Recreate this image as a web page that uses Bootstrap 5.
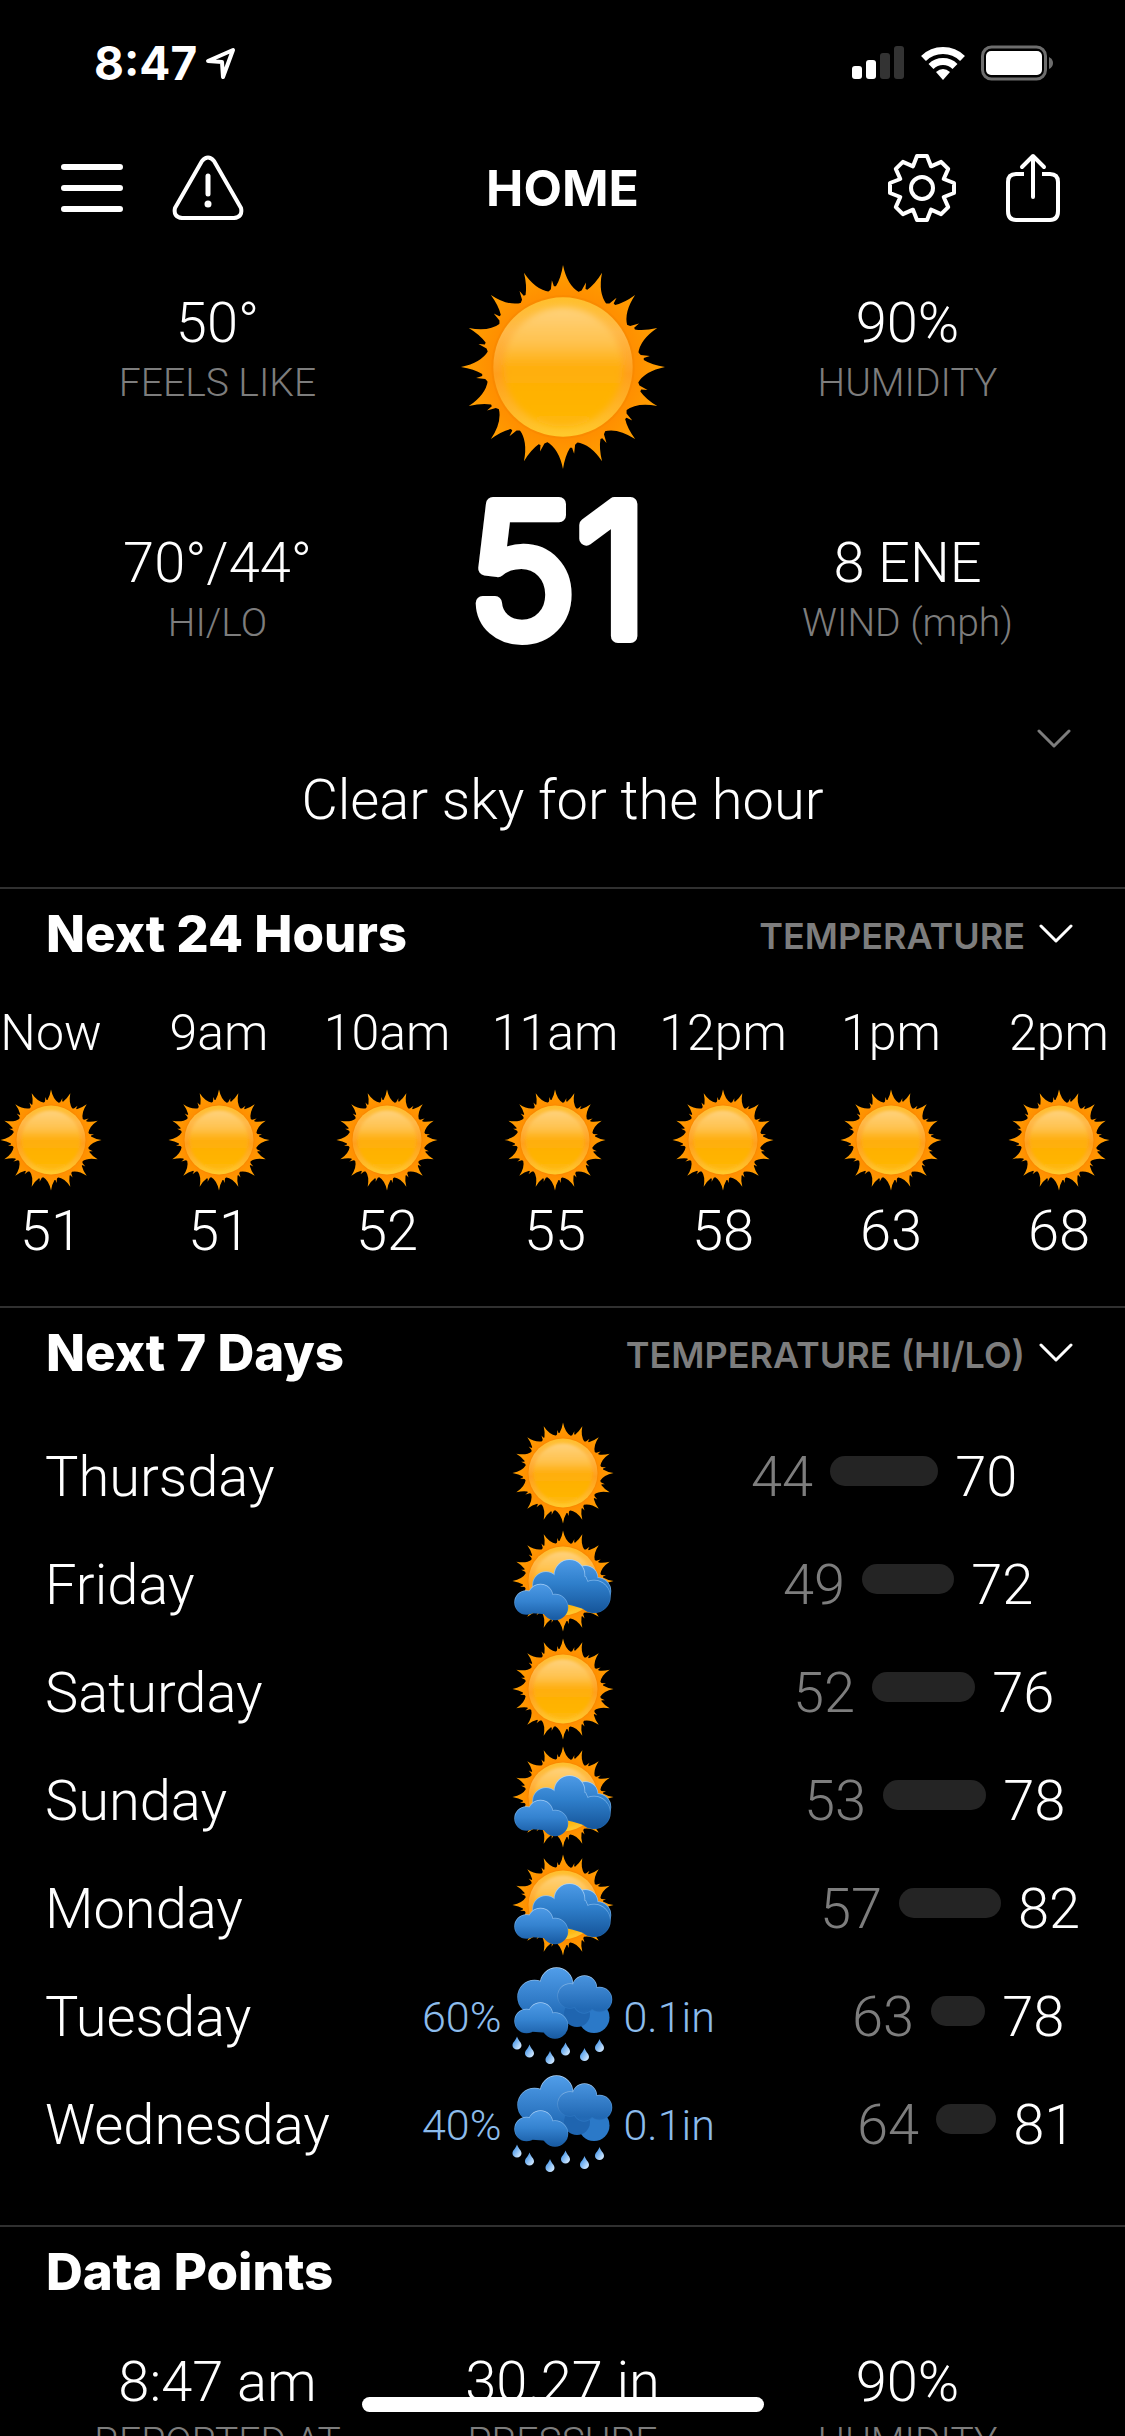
<!DOCTYPE html>
<html lang="en" data-bs-theme="dark">
<head>
<meta charset="utf-8">
<meta name="viewport" content="width=device-width, initial-scale=1">
<title>Home weather</title>
<link href="https://cdn.jsdelivr.net/npm/bootstrap@5.3.0/dist/css/bootstrap.min.css" rel="stylesheet">
<style>
  :root { --dim: #7d7d7d; --rule: #303030; --rain: #8cbcec; --edge: 45px; }
  body { background: #000; color: #fff; font-family: Roboto, "Liberation Sans", sans-serif; font-weight: 300; }
  .screen { overflow-y: auto; scrollbar-width: none; }
  .screen::-webkit-scrollbar { display: none; }
  .ui { font-family: Inter, "Liberation Sans", sans-serif; }
  .screen svg { display: block; flex: none; }
  .icon-btn { background: none; border: 0; padding: 0; color: inherit; }
  .line { fill: none; stroke: currentColor; stroke-linecap: round; stroke-linejoin: round; }

  .statusbar { height: 126px; padding: 0 71px 0 94px; }
  .status-icons { gap: 16px; }
  .clock { font-size: 46px; font-weight: 700; }
  .topbar { height: 124px; padding: 0 60px; }
  .topbar h1 { font-size: 50px; font-weight: 700; }

  .now { padding: 2px var(--edge) 0; }
  .stats { gap: 120px; padding-top: 39px; }
  .val { font-size: 56px; line-height: 64px; }
  .cap { font-size: 39px; line-height: 56px; color: var(--dim); }
  .hero { padding-top: 12px; }
  .bigtemp { margin-top: 21px; overflow: visible; }
  .bigtemp text { font-size: 182px; font-weight: 300; fill: #fff; stroke: #fff; stroke-width: 14px; stroke-linejoin: round; text-anchor: middle; }
  .expand { padding: 77px 54px 0; color: var(--dim); }
  .summary { padding: 18px var(--edge) 55px; }

  .block { border-top: 2px solid var(--rule); }
  .head { height: 90px; padding: 0 52px 0 46px; }
  .head h2 { font-size: 51px; font-weight: 800; }
  .pick { gap: 14px; }
  .pick select { appearance: none; background: none; border: 0; padding: 4px 0 0; color: var(--dim); font-size: 36px; font-weight: 600; text-align-last: right; }

  .hours { margin: 0 -33px; padding: 24px 0 43px; }
  .hour { flex: 0 0 168px; }
  .hour-label { font-size: 50px; line-height: 60px; }
  .hour svg { margin: 26px 0 8px; }

  .days { padding: 21px var(--edge) 50px; }
  .day { display: grid; grid-template-columns: 1fr 102px 1fr; column-gap: 10px; height: 108px; align-items: center; }
  .day-text { padding-top: 8px; }
  .wet { font-size: 43px; color: var(--rain); }
  .range { width: 329px; gap: 17px; }
  .lo { color: var(--dim); }
  .span-bar { height: 30px; border-radius: 15px; background: #242424; margin-bottom: 12px; }
  .points { padding: 33px var(--edge) 40px; }
  .homebar { left: 50%; bottom: 24px; width: 402px; height: 15px; margin-left: -201px; border-radius: 8px; background: #fff; }
</style>
</head>
<body>
<svg width="0" height="0" class="position-absolute" aria-hidden="true">
  <defs>
    <linearGradient id="gRay" gradientUnits="userSpaceOnUse" x1="0" y1="-101" x2="0" y2="-66"><stop offset="0" stop-color="#ffa000"/><stop offset="1" stop-color="#ff8c00"/></linearGradient>
    <linearGradient id="gRim" x1="0" y1="0" x2="0" y2="1"><stop offset="0" stop-color="#ffc02c"/><stop offset=".25" stop-color="#ffb848"/><stop offset=".55" stop-color="#ff9f1c"/><stop offset=".8" stop-color="#ffb628"/><stop offset="1" stop-color="#ffca2c"/></linearGradient>
    <linearGradient id="gDisc" x1="0" y1="0" x2="0" y2="1"><stop offset="0" stop-color="#ffd27c"/><stop offset=".3" stop-color="#ffc24e"/><stop offset=".5" stop-color="#ffae0c"/><stop offset=".8" stop-color="#ffb300"/><stop offset="1" stop-color="#ffb80c"/></linearGradient>
    <filter id="soft" x="-20%" y="-20%" width="140%" height="140%"><feGaussianBlur stdDeviation="3"/></filter>
    <linearGradient id="gBack" gradientUnits="userSpaceOnUse" x1="0" y1="-42" x2="0" y2="62"><stop offset="0" stop-color="#4d9ae6"/><stop offset=".45" stop-color="#2f7fcb"/><stop offset="1" stop-color="#16569b"/></linearGradient>
    <linearGradient id="gSmall" gradientUnits="userSpaceOnUse" x1="0" y1="5" x2="0" y2="76"><stop offset="0" stop-color="#4d9ae6"/><stop offset=".5" stop-color="#3583d0"/><stop offset="1" stop-color="#195ca4"/></linearGradient>
    <linearGradient id="gEdge" gradientUnits="userSpaceOnUse" x1="0" y1="-42" x2="0" y2="50"><stop offset="0" stop-color="#b4d8fa"/><stop offset=".6" stop-color="#6aa9e4"/><stop offset="1" stop-color="#1d62ab"/></linearGradient>
    <linearGradient id="gEdgeS" gradientUnits="userSpaceOnUse" x1="0" y1="5" x2="0" y2="66"><stop offset="0" stop-color="#a9d0f8"/><stop offset=".6" stop-color="#5b9fdf"/><stop offset="1" stop-color="#1d62ab"/></linearGradient>
    <linearGradient id="gStorm" gradientUnits="userSpaceOnUse" x1="0" y1="-90" x2="0" y2="10"><stop offset="0" stop-color="#509de9"/><stop offset="1" stop-color="#2069b5"/></linearGradient>
    <linearGradient id="gStorm2" gradientUnits="userSpaceOnUse" x1="0" y1="-74" x2="0" y2="20"><stop offset="0" stop-color="#4893de"/><stop offset=".7" stop-color="#2269b4"/><stop offset="1" stop-color="#2670bc"/></linearGradient>
    <linearGradient id="gStormE" gradientUnits="userSpaceOnUse" x1="0" y1="-90" x2="0" y2="-10"><stop offset="0" stop-color="#b4d8fa"/><stop offset="1" stop-color="#2a74c0"/></linearGradient>
    <linearGradient id="gDrop" x1="0" y1="0" x2="1" y2="1"><stop offset=".3" stop-color="#5ea4ec"/><stop offset=".8" stop-color="#c4e0fc"/></linearGradient>

    <path id="ray" fill="url(#gRay)" d="M-20-64L-15-74-12-77-11-86-9-80-7-80Q-2-88 0-101Q4-81 16-74L20-64Z"/>
    <g id="rays4"><use href="#ray"/><use href="#ray" transform="rotate(22.5)"/><use href="#ray" transform="rotate(45)"/><use href="#ray" transform="rotate(67.5)"/></g>
    <g id="sunArt">
      <use href="#rays4"/><use href="#rays4" transform="rotate(90)"/><use href="#rays4" transform="rotate(180)"/><use href="#rays4" transform="rotate(270)"/>
      <circle r="71" fill="#fa8a00"/>
      <circle r="69" fill="url(#gRim)"/>
      <circle r="59" fill="url(#gDisc)" filter="url(#soft)"/>
    </g>
    <g id="smallShape"><circle cx="-73" cy="43" r="23"/><circle cx="-45" cy="31" r="24"/><circle cx="-16" cy="52" r="25"/><path d="M-73 43L-45 31-16 52-22 66-60 63Z"/></g>
    <g id="smallCloud"><use href="#smallShape" fill="none" stroke="url(#gEdgeS)" stroke-width="3"/><use href="#smallShape" fill="url(#gSmall)"/></g>
    <g id="bigShape"><circle cx="-34" cy="8" r="26"/><circle cx="13" cy="-12" r="30"/><circle cx="62" cy="31" r="32"/><path d="M-50 0L13-20 45-8 62 31 60 60 20 48-40 34Z"/></g>
    <g id="farShape"><circle cx="45" cy="-6" r="24"/><circle cx="69" cy="20" r="26"/></g>
    <symbol id="sun" viewBox="-102 -102 204 204"><use href="#sunArt"/></symbol>
    <symbol id="partly" viewBox="-102 -102 204 204">
      <use href="#sunArt"/>
      <use href="#farShape" fill="none" stroke="url(#gEdge)" stroke-width="3"/><use href="#farShape" fill="url(#gBack)"/>
      <use href="#bigShape" fill="none" stroke="url(#gEdge)" stroke-width="3"/><use href="#bigShape" fill="url(#gBack)"/>
      <use href="#smallCloud"/>
    </symbol>
    <g id="stormA"><circle cx="-57" cy="-32" r="33"/><circle cx="-13" cy="-58" r="32"/><path d="M-70-20L0-50 40-40 40 20-50 0Z"/></g>
    <g id="stormB"><circle cx="14" cy="-34" r="24"/><circle cx="43" cy="-50" r="24"/><circle cx="73" cy="-27" r="24"/><circle cx="42" cy="-20" r="20"/></g>
    <path id="drop" fill="url(#gDrop)" d="M0-13C3-4 9-2 9 5A9 8 0 0 1-9 5C-9-2-3-4 0-13Z"/>
    <symbol id="rain" viewBox="-102 -102 204 204">
      <use href="#stormA" fill="none" stroke="url(#gStormE)" stroke-width="3"/><use href="#stormA" fill="url(#gStorm)"/>
      <circle cx="62" cy="9" r="31" fill="#2b79c8"/>
      <circle cx="28" cy="2" r="26" fill="#1f65b0"/>
      <use href="#stormB" fill="none" stroke="url(#gStormE)" stroke-width="3"/><use href="#stormB" fill="url(#gStorm2)"/>
      <use href="#smallCloud" y="-27"/>
      <use href="#drop" x="-92" y="60"/><use href="#drop" x="-67" y="76"/><use href="#drop" x="-26" y="89"/><use href="#drop" x="5" y="72"/><use href="#drop" x="43" y="83"/><use href="#drop" x="73" y="65"/>
    </symbol>
    <symbol id="chev" viewBox="0 0 34 22"><path class="line" stroke-width="3" d="M2 3L17 18 32 3"/></symbol>
  </defs>
</svg>

<div class="screen vh-100">
  <div class="statusbar ui d-flex align-items-center justify-content-between">
    <div class="d-flex align-items-center gap-2">
      <span class="clock">8:47</span>
      <svg width="32" height="34" viewBox="0 0 32 34" aria-hidden="true"><path class="line" stroke-width="4" d="M3 15L28 4 18 31 17 16Z"/></svg>
    </div>
    <div class="status-icons d-flex align-items-center">
      <svg width="53" height="34" viewBox="0 0 53 34" aria-label="Signal"><g fill="#fff"><rect y="20" width="10" height="13" rx="3"/><rect x="14" y="14" width="10" height="19" rx="3"/></g><g fill="#333"><rect x="28" y="7" width="10" height="26" rx="3"/><rect x="42" width="10" height="33" rx="3"/></g></svg>
      <svg width="44" height="34" viewBox="0 0 44 34" aria-label="Wi-Fi"><g fill="none" stroke="#fff" stroke-width="7"><path d="M2.500 12.500A28 28 0 0 1 41.500 12.500"/><path d="M10 20.500A17 17 0 0 1 34 20.500"/></g><path fill="#fff" d="M15 26Q22 20 29 26L22 34Z"/></svg>
      <svg width="73" height="36" viewBox="0 0 73 36" aria-label="Battery"><rect x="1.500" y="2" width="63" height="32" rx="9" fill="none" stroke="#6d6d6d" stroke-width="3"/><rect x="5" y="6" width="56" height="24" rx="5" fill="#fff"/><path fill="#6d6d6d" d="M68 12Q72 14 72 18T68 24Z"/></svg>
    </div>
  </div>

  <header class="topbar ui d-flex align-items-center">
    <div class="col d-flex align-items-center">
      <button class="icon-btn" aria-label="Menu"><svg width="64" height="52" viewBox="0 0 64 52"><path class="line" stroke-width="6" d="M4 5H60M4 26H60M4 47H60"/></svg></button>
      <button class="icon-btn ms-5" aria-label="Alerts"><svg width="72" height="66" viewBox="0 0 72 66"><path class="line" stroke-width="4" d="M30 6Q36-1 42 6L69 53Q71 62 62 63H10Q1 62 3 53Z"/><path class="line" stroke-width="5" d="M36 21V39"/><circle cx="36" cy="49" r="3.500" fill="#fff"/></svg></button>
    </div>
    <h1 class="m-0">HOME</h1>
    <div class="col d-flex align-items-center justify-content-end">
      <button class="icon-btn me-5" aria-label="Settings"><svg width="70" height="70" viewBox="-35 -35 70 70"><path class="line" stroke-width="4" d="M-5-32H5L9-21.700 19.100-26.200 26.200-19.100 21.700-9 32-5V5L21.700 9 26.200 19.100 19.100 26.200 9 21.700 5 32H-5L-9 21.700-19.100 26.200-26.200 19.100-21.700 9-32 5V-5L-21.700-9-26.200-19.100-19.100-26.200-9-21.700Z"/><circle class="line" stroke-width="4" r="11"/></svg></button>
      <button class="icon-btn me-1" aria-label="Share"><svg width="56" height="70" viewBox="0 0 56 70"><path class="line" stroke-width="4" style="stroke-linecap:butt" d="M19 21H11Q3 21 3 29V58Q3 67 11 67H45Q53 67 53 58V29Q53 21 45 21H37"/><path class="line" stroke-width="4" d="M28 3V44M17 14L28 3 39 14"/></svg></button>
    </div>
  </header>

  <main>
    <section class="now row g-0 text-center" aria-label="Current conditions">
      <div class="col stats d-flex flex-column">
        <div><div class="val">50°</div><div class="cap">FEELS LIKE</div></div>
        <div><div class="val">70°/44°</div><div class="cap">HI/LO</div></div>
      </div>
      <div class="col hero d-flex flex-column align-items-center">
        <svg width="206" height="206" role="img" aria-label="Sunny"><use href="#sun"/></svg>
        <svg class="bigtemp ui" width="240" height="160"><text x="115" y="145">51</text></svg>
      </div>
      <div class="col stats d-flex flex-column">
        <div><div class="val">90%</div><div class="cap">HUMIDITY</div></div>
        <div><div class="val">8 ENE</div><div class="cap">WIND (mph)</div></div>
      </div>
    </section>
    <div class="expand d-flex justify-content-end"><button class="icon-btn" aria-label="Show next hour"><svg width="34" height="22"><use href="#chev"/></svg></button></div>
    <p class="summary val text-center m-0">Clear sky for the hour</p>

    <section class="block overflow-hidden">
      <div class="head ui d-flex align-items-center justify-content-between">
        <h2 class="m-0">Next 24 Hours</h2>
        <label class="pick d-flex align-items-center"><select aria-label="Hourly measure"><option>TEMPERATURE</option><option>WIND</option></select><svg width="34" height="22"><use href="#chev"/></svg></label>
      </div>
      <ul class="hours d-flex list-unstyled mb-0 text-center">
        <li class="hour d-flex flex-column align-items-center"><span class="hour-label">Now</span><svg width="102" height="102"><use href="#sun"/></svg><span class="val">51</span></li>
        <li class="hour d-flex flex-column align-items-center"><span class="hour-label">9am</span><svg width="102" height="102"><use href="#sun"/></svg><span class="val">51</span></li>
        <li class="hour d-flex flex-column align-items-center"><span class="hour-label">10am</span><svg width="102" height="102"><use href="#sun"/></svg><span class="val">52</span></li>
        <li class="hour d-flex flex-column align-items-center"><span class="hour-label">11am</span><svg width="102" height="102"><use href="#sun"/></svg><span class="val">55</span></li>
        <li class="hour d-flex flex-column align-items-center"><span class="hour-label">12pm</span><svg width="102" height="102"><use href="#sun"/></svg><span class="val">58</span></li>
        <li class="hour d-flex flex-column align-items-center"><span class="hour-label">1pm</span><svg width="102" height="102"><use href="#sun"/></svg><span class="val">63</span></li>
        <li class="hour d-flex flex-column align-items-center"><span class="hour-label">2pm</span><svg width="102" height="102"><use href="#sun"/></svg><span class="val">68</span></li>
      </ul>
    </section>

    <section class="block">
      <div class="head ui d-flex align-items-center justify-content-between">
        <h2 class="m-0">Next 7 Days</h2>
        <label class="pick d-flex align-items-center"><select aria-label="Daily measure"><option>TEMPERATURE (HI/LO)</option><option>WIND</option></select><svg width="34" height="22"><use href="#chev"/></svg></label>
      </div>
      <ul class="days list-unstyled mb-0">
        <li class="day"><div class="day-text"><span class="val">Thursday</span></div><svg width="102" height="102"><use href="#sun"/></svg><div class="day-text d-flex justify-content-end"><div class="range val d-flex align-items-center"><span class="lo">44</span><span class="span-bar" style="width:108px"></span><span>70</span></div></div></li>
        <li class="day"><div class="day-text"><span class="val">Friday</span></div><svg width="102" height="102"><use href="#partly"/></svg><div class="day-text d-flex justify-content-end"><div class="range val d-flex align-items-center"><span class="lo" style="margin-left:32px">49</span><span class="span-bar" style="width:92px"></span><span>72</span></div></div></li>
        <li class="day"><div class="day-text"><span class="val">Saturday</span></div><svg width="102" height="102"><use href="#sun"/></svg><div class="day-text d-flex justify-content-end"><div class="range val d-flex align-items-center"><span class="lo" style="margin-left:42px">52</span><span class="span-bar" style="width:103px"></span><span>76</span></div></div></li>
        <li class="day"><div class="day-text"><span class="val">Sunday</span></div><svg width="102" height="102"><use href="#partly"/></svg><div class="day-text d-flex justify-content-end"><div class="range val d-flex align-items-center"><span class="lo" style="margin-left:53px">53</span><span class="span-bar" style="width:103px"></span><span>78</span></div></div></li>
        <li class="day"><div class="day-text"><span class="val">Monday</span></div><svg width="102" height="102"><use href="#partly"/></svg><div class="day-text d-flex justify-content-end"><div class="range val d-flex align-items-center"><span class="lo" style="margin-left:69px">57</span><span class="span-bar" style="width:102px"></span><span>82</span></div></div></li>
        <li class="day"><div class="day-text d-flex align-items-center justify-content-between"><span class="val">Tuesday</span><span class="wet">60%</span></div><svg width="102" height="102"><use href="#rain"/></svg><div class="day-text d-flex align-items-center justify-content-between"><span class="wet">0.1in</span><div class="range val d-flex align-items-center"><span class="lo" style="margin-left:101px">63</span><span class="span-bar" style="width:54px"></span><span>78</span></div></div></li>
        <li class="day"><div class="day-text d-flex align-items-center justify-content-between"><span class="val">Wednesday</span><span class="wet">40%</span></div><svg width="102" height="102"><use href="#rain"/></svg><div class="day-text d-flex align-items-center justify-content-between"><span class="wet">0.1in</span><div class="range val d-flex align-items-center"><span class="lo" style="margin-left:106px">64</span><span class="span-bar" style="width:60px"></span><span>81</span></div></div></li>
      </ul>
    </section>

    <section class="block">
      <div class="head ui d-flex align-items-center"><h2 class="m-0">Data Points</h2></div>
      <div class="points row g-0 text-center">
        <div class="col"><div class="val">8:47 am</div><div class="cap">REPORTED AT</div></div>
        <div class="col"><div class="val">30.27 in</div><div class="cap">PRESSURE</div></div>
        <div class="col"><div class="val">90%</div><div class="cap">HUMIDITY</div></div>
      </div>
    </section>
  </main>
</div>
<div class="homebar position-fixed"></div>
<script src="https://cdn.jsdelivr.net/npm/bootstrap@5.3.0/dist/js/bootstrap.bundle.min.js"></script>
</body>
</html>
